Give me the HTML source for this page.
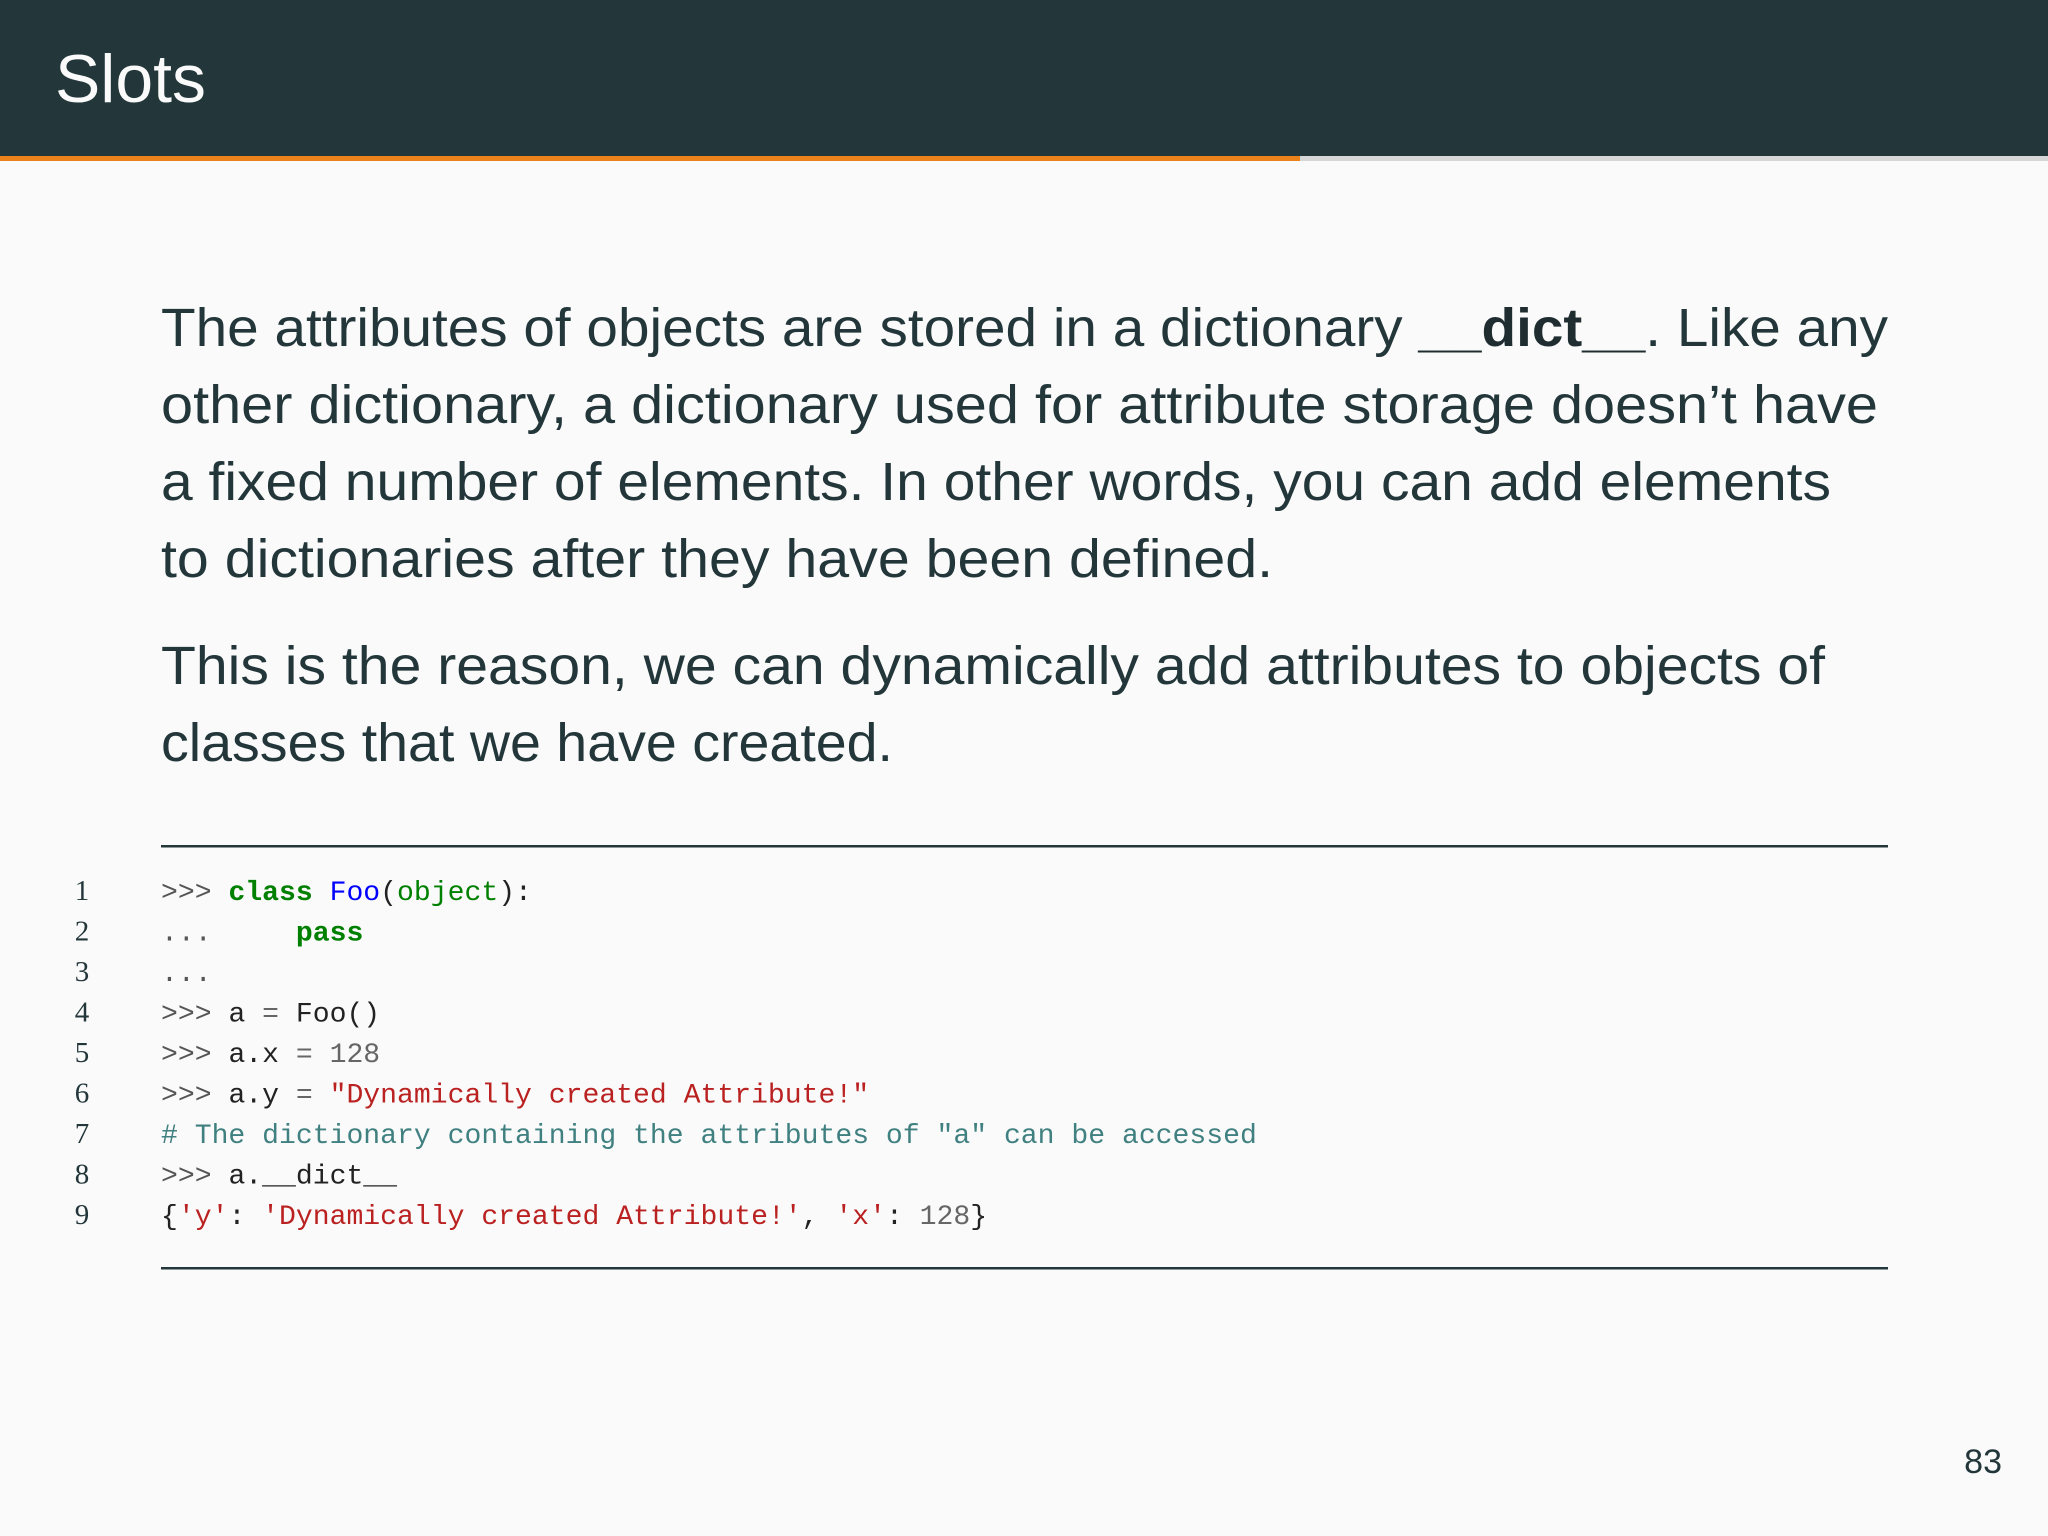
<!DOCTYPE html>
<html><head><meta charset="utf-8"><style>
html,body{margin:0;padding:0;width:2048px;height:1536px;overflow:hidden;background:#fafafa}
svg{position:absolute;left:0;top:0}
</style></head><body>
<svg width="2048" height="1536" viewBox="0 0 2048 1536" xmlns="http://www.w3.org/2000/svg">
<rect x="0" y="0" width="2048" height="1536" fill="#fafafa"/>
<rect x="0" y="0" width="2048" height="157" fill="#23373b"/>
<rect x="0" y="156" width="1300" height="5" fill="#eb811b"/>
<rect x="1300" y="156" width="748" height="5" fill="#d6d6d6"/>
<text x="55" y="102" font-family="Liberation Sans, sans-serif" font-size="68" fill="#fafafa" textLength="151" lengthAdjust="spacingAndGlyphs">Slots</text>

<g font-family="Liberation Sans, sans-serif" font-size="54" fill="#23373b">
<text x="161" y="346" textLength="1727" lengthAdjust="spacingAndGlyphs">The attributes of objects are stored in a dictionary <tspan font-weight="bold" fill="#1f2d30">__dict__</tspan>. Like any</text>
<text x="161" y="423" textLength="1717" lengthAdjust="spacingAndGlyphs">other dictionary, a dictionary used for attribute storage doesn’t have</text>
<text x="161" y="500" textLength="1670" lengthAdjust="spacingAndGlyphs">a fixed number of elements. In other words, you can add elements</text>
<text x="161" y="577" textLength="1112" lengthAdjust="spacingAndGlyphs">to dictionaries after they have been defined.</text>
<text x="161" y="684" textLength="1664" lengthAdjust="spacingAndGlyphs">This is the reason, we can dynamically add attributes to objects of</text>
<text x="161" y="761" textLength="732" lengthAdjust="spacingAndGlyphs">classes that we have created.</text>
</g>

<rect x="161" y="845" width="1727" height="2.5" fill="#23373b"/>
<rect x="161" y="1267" width="1727" height="2.5" fill="#23373b"/>

<g font-family="Liberation Serif, serif" font-size="29" fill="#23373b" text-anchor="middle">
<text x="82" y="900">1</text><text x="82" y="940.5">2</text><text x="82" y="981">3</text>
<text x="82" y="1021.5">4</text><text x="82" y="1062">5</text><text x="82" y="1102.5">6</text>
<text x="82" y="1143">7</text><text x="82" y="1183.5">8</text><text x="82" y="1224">9</text>
</g>

<g font-family="Liberation Mono, monospace" font-size="28.1" fill="#222">
<text x="161" y="900"><tspan fill="#555">&gt;&gt;&gt;&#160;</tspan><tspan fill="#008000" font-weight="bold">class</tspan>&#160;<tspan fill="#0000ff">Foo</tspan>(<tspan fill="#008000">object</tspan>):</text>
<text x="161" y="940.5"><tspan fill="#555">...&#160;&#160;&#160;&#160;&#160;</tspan><tspan fill="#008000" font-weight="bold">pass</tspan></text>
<text x="161" y="981"><tspan fill="#555">...</tspan></text>
<text x="161" y="1021.5"><tspan fill="#555">&gt;&gt;&gt;&#160;</tspan>a&#160;<tspan fill="#666">=</tspan>&#160;Foo()</text>
<text x="161" y="1062"><tspan fill="#555">&gt;&gt;&gt;&#160;</tspan>a.x&#160;<tspan fill="#666">=</tspan>&#160;<tspan fill="#666">128</tspan></text>
<text x="161" y="1102.5"><tspan fill="#555">&gt;&gt;&gt;&#160;</tspan>a.y&#160;<tspan fill="#666">=</tspan>&#160;<tspan fill="#ba2121">"Dynamically created Attribute!"</tspan></text>
<text x="161" y="1143" fill="#408080"># The dictionary containing the attributes of "a" can be accessed</text>
<text x="161" y="1183.5"><tspan fill="#555">&gt;&gt;&gt;&#160;</tspan>a.__dict__</text>
<text x="161" y="1224">{<tspan fill="#ba2121">'y'</tspan>:&#160;<tspan fill="#ba2121">'Dynamically created Attribute!'</tspan>,&#160;<tspan fill="#ba2121">'x'</tspan>:&#160;<tspan fill="#666">128</tspan>}</text>
</g>

<text x="2002" y="1473" text-anchor="end" font-family="Liberation Sans, sans-serif" font-size="34" fill="#23373b">83</text>
</svg>
</body></html>
